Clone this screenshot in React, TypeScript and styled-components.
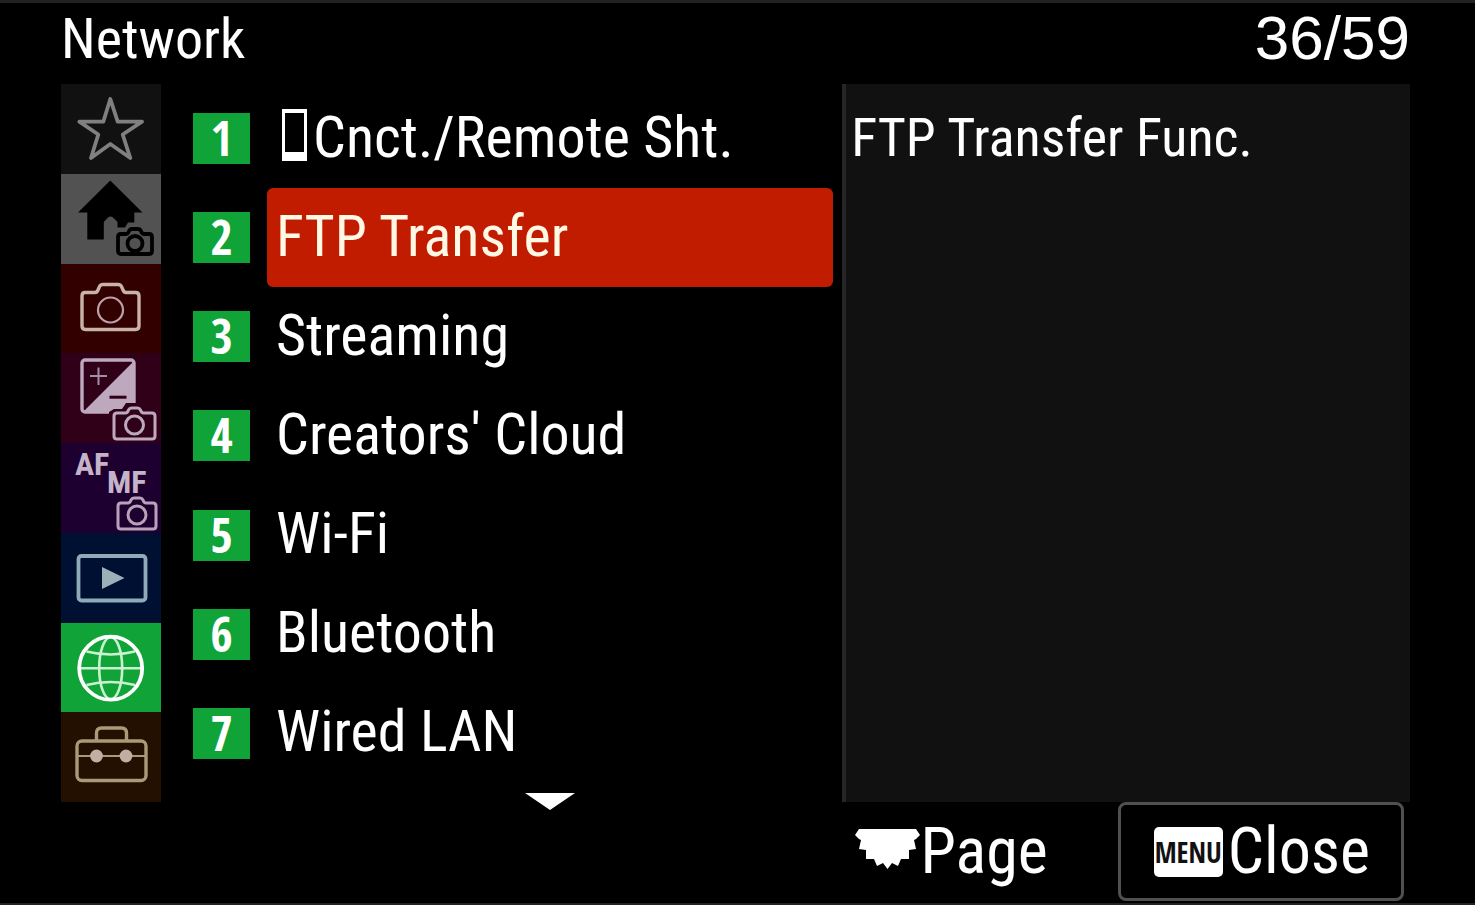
import React from "react";
import styled, { createGlobalStyle } from "styled-components";

const narrow = '"Roboto Condensed", Roboto, sans-serif';
const narrowBold = '"Open Sans Condensed", "Open Sans", sans-serif';

const GlobalStyle = createGlobalStyle`
  *, *::before, *::after { box-sizing: border-box; }
  body { margin: 0; background: #000; }
  h1, h2, p, ul, ol { margin: 0; padding: 0; font-weight: 400; }
  button { border: 0; margin: 0; padding: 0; background: none; color: inherit; font: inherit; cursor: pointer; }
`;

const Screen = styled.div`
  display: grid;
  grid-template-rows: 81px 1fr 101px;
  min-height: 100vh;
  border-top: 3px solid #222;
  border-bottom: 2px solid #222;
  background: #000;
  color: #fff;
  font-family: ${narrow};
`;

const Header = styled.header`
  display: flex;
  justify-content: space-between;
  padding: 0 65px 0 61px;
  line-height: 72px;
`;

const Title = styled.h1`
  font-size: 56px;
`;

const Counter = styled.p`
  font-family: "Liberation Sans", sans-serif;
  font-size: 62px;
  line-height: 70px;
`;

const Main = styled.main`
  display: grid;
  grid-template-columns: 100px minmax(0, 6fr) minmax(0, 5fr);
  padding: 0 65px 0 61px;
`;

const Tabs = styled.nav`
  display: flex;
  flex-direction: column;
`;

const Tab = styled.button<{ $bg: string }>`
  display: flex;
  flex: 1 1 0;
  background: ${(p) => p.$bg};

  svg {
    flex: none;
    width: 100px;
    height: 89px;
    overflow: visible;
  }
`;

const MenuColumn = styled.section`
  display: flex;
  flex-direction: column;
  padding: 5px 9px 0 32px;
`;

const MenuList = styled.ol`
  display: flex;
  flex: 1;
  flex-direction: column;
  list-style: none;
`;

const MenuRow = styled.li`
  display: flex;
  flex: 1 1 0;
  align-items: center;
  gap: 17px;
`;

const Badge = styled.span`
  flex: none;
  width: 57px;
  height: 51px;
  background: #10a337;
  font-family: ${narrowBold};
  font-size: 48px;
  font-weight: 700;
  line-height: 50px;
  text-align: center;
`;

const MenuItem = styled.button<{ $selected: boolean }>`
  display: flex;
  flex: 1;
  align-self: stretch;
  align-items: center;
  min-width: 0;
  padding: 0 9px 4px;
  border-radius: 6px;
  background: ${(p) => (p.$selected ? "#c21c00" : "transparent")};
  color: ${(p) => (p.$selected ? "#fff8e4" : "#fff")};
  font-size: 58px;
  line-height: 72px;
  white-space: nowrap;

  svg {
    flex: none;
    margin: 0 6px 4px;
  }
`;

const ScrollDown = styled.button`
  align-self: flex-end;
  display: flex;
  justify-content: center;
  width: calc(100% - 74px);
  height: 19px;
  padding-top: 10px;

  svg {
    flex: none;
  }
`;

const Detail = styled.aside`
  padding: 17px 5px;
  border-left: 4px solid #262626;
  background: #111;
  font-size: 54px;
  line-height: 74px;
`;

const Footer = styled.footer`
  display: flex;
  justify-content: flex-end;
  gap: 70px;
  padding: 0 71px 2px 0;
  font-size: 64px;
  line-height: 72px;
`;

const PageButton = styled.button`
  display: flex;
  align-items: center;

  svg {
    margin-bottom: 6px;
  }
`;

const CloseButton = styled.button`
  display: flex;
  align-items: center;
  gap: 5px;
  padding: 0 31px 0 33px;
  border: 3px solid #505050;
  border-radius: 8px;
`;

const MenuKey = styled.span`
  width: 69px;
  height: 50px;
  border-radius: 5px;
  background: #fff;
  color: #111;
  font-family: ${narrowBold};
  font-size: 28px;
  font-weight: 700;
  line-height: 50px;
  text-align: center;
`;

function SmallCamera({ x, y, color, w = 40 }: { x: number; y: number; color: string; w?: number }) {
  const m = w / 2;
  return (
    <g transform={`translate(${x} ${y})`} fill="none" stroke={color} strokeWidth="3" strokeLinejoin="round">
      <path
        d={`M3 5 H${m - 9} Q${m - 7} 5 ${m - 6} 2 Q${m - 5} 0 ${m - 3} 0 H${m + 3} Q${m + 5} 0 ${m + 6} 2 Q${m + 7} 5 ${m + 9} 5 H${w - 3} Q${w} 5 ${w} 8 V28 Q${w} 31 ${w - 3} 31 H3 Q0 31 0 28 V8 Q0 5 3 5 Z`}
      />
      <circle cx={m} cy="17" r="9" />
    </g>
  );
}

const Star = () => (
  <path
    d="M49.3 15 56.7 37.7H81L61.7 50.5 69.3 74 49.3 60 30 74 37.3 50.5 18.3 37.7H42.3Z"
    fill="none"
    stroke="#808080"
    strokeWidth="3.8"
    strokeLinejoin="round"
  />
);

const House = () => (
  <>
    <path
      d="M49.3 6.5 81.5 38.5H73.3V48.5H67L64 53.5H56.5V48L52 43.5Q49.5 41.5 47 43.5L42.8 48V65.6H26.3V38.5H17Z"
      fill="#000"
    />
    <g transform="translate(57 55)" fill="none" stroke="#000" strokeWidth="3.8" strokeLinejoin="round">
      <path d="M3 5H8Q10 5 11 2Q12 0 14 0H20Q22 0 23 2Q24 5 26 5H31Q34 5 34 8V22Q34 25 31 25H3Q0 25 0 22V8Q0 5 3 5Z" />
      <circle cx="17" cy="14.5" r="7.5" />
    </g>
  </>
);

const Camera = () => (
  <g fill="none">
    <path
      d="M24 28.5H34Q36 28.5 37 26L38.5 22.5Q39.5 20.5 42 20.5H57Q59.5 20.5 60.5 22.5L62 26Q63 28.5 65 28.5H74.5Q78 28.5 78 32V62Q78 65.5 74.5 65.5H24.5Q21 65.5 21 62V32Q21 28.5 24 28.5Z"
      stroke="#c9b2a8"
      strokeWidth="3.4"
    />
    <circle cx="49.5" cy="46" r="12.5" stroke="#bda1aa" strokeWidth="2.2" />
  </g>
);

const Exposure = () => (
  <>
    <rect x="21" y="7" width="52" height="52" rx="3" fill="none" stroke="#bda8bd" strokeWidth="3.4" />
    <path d="M22 59H70Q73 59 73 56V8Z" fill="#bda8bd" />
    <path d="M29 23H46M37.5 14.5V32" stroke="#a58ca5" strokeWidth="2" />
    <path d="M48.5 44.2H65.5" stroke="#300019" strokeWidth="3" />
    <path d="M48 64V59L53 56H61L65 50H82V64Z" fill="#300019" />
    <SmallCamera x={53} y={55} color="#bda8bd" w={41} />
  </>
);

const Focus = () => (
  <>
    <g fill="#c5b3c9" fontFamily={narrow} fontSize="32" fontWeight="700">
      <text x="14" y="32">AF</text>
      <text x="46" y="50">MF</text>
    </g>
    <SmallCamera x={57} y={55} color="#b7a2b9" w={38} />
  </>
);

const Playback = () => (
  <>
    <rect x="17.5" y="23" width="67" height="44.5" rx="3" fill="none" stroke="#8fabb7" strokeWidth="3.8" />
    <path d="M41 34 63.5 45 41 56Z" fill="#9bb0b9" />
  </>
);

const Globe = () => (
  <g fill="none" stroke="#c8f2d0" strokeWidth="2.6">
    <ellipse cx="49.7" cy="45.2" rx="11.5" ry="31" />
    <path d="M18 45.2H81M25.5 28.5Q49.7 34.5 74 28.5M25.5 62Q49.7 56 74 62" />
    <circle cx="49.7" cy="45.2" r="31.5" stroke="#fff" strokeWidth="3.8" />
  </g>
);

const Toolbox = () => (
  <>
    <g fill="none" stroke="#a99a78" strokeWidth="3.4">
      <rect x="16" y="29" width="69" height="39.5" rx="5" />
      <path d="M35.5 28V21Q35.5 16 40.5 16H60.5Q65.5 16 65.5 21V28" />
      <path d="M17 44H84" strokeWidth="2" />
    </g>
    <circle cx="35.5" cy="44" r="6.4" fill="#c3aea2" />
    <circle cx="65" cy="44" r="6.4" fill="#c3aea2" />
  </>
);

const tabs = [
  { name: "My Menu", bg: "#111111", Icon: Star },
  { name: "Main", bg: "#525252", Icon: House },
  { name: "Shooting", bg: "#330000", Icon: Camera },
  { name: "Exposure/Color", bg: "#300019", Icon: Exposure },
  { name: "Focus", bg: "#1e0030", Icon: Focus },
  { name: "Playback", bg: "#001033", Icon: Playback },
  { name: "Network", bg: "#10a337", Icon: Globe },
  { name: "Setup", bg: "#231000", Icon: Toolbox },
];

const items = [
  "Cnct./Remote Sht.",
  "FTP Transfer",
  "Streaming",
  "Creators' Cloud",
  "Wi-Fi",
  "Bluetooth",
  "Wired LAN",
];

const PhoneIcon = () => (
  <svg width="25" height="52" viewBox="0 0 25 52" aria-hidden="true">
    <path d="M0 0H25V52H0ZM3 4V43H22V4Z" fill="#fff" fillRule="evenodd" />
  </svg>
);

const DialIcon = () => (
  <svg width="65" height="40" viewBox="0 0 65 40" aria-hidden="true">
    <path
      d="M4 0H61L65 6 61 10 59 11 61 20 54 21 54 30 46 30 43 37 37 34 32.5 40 28 34 22 37 19 30 11 30 11 21 4 20 6 11 4 10 0 6Z"
      fill="#fff"
    />
  </svg>
);

export default function App() {
  const [selected, setSelected] = React.useState(1);
  return (
    <>
      <GlobalStyle />
      <Screen>
        <Header>
          <Title>Network</Title>
          <Counter>36/59</Counter>
        </Header>
        <Main>
          <Tabs aria-label="Menu tabs">
            {tabs.map(({ name, bg, Icon }) => (
              <Tab key={name} $bg={bg} aria-label={name}>
                <svg viewBox="0 0 100 89" aria-hidden="true">
                  <Icon />
                </svg>
              </Tab>
            ))}
          </Tabs>
          <MenuColumn>
            <MenuList>
              {items.map((label, i) => (
                <MenuRow key={label}>
                  <Badge>{i + 1}</Badge>
                  <MenuItem $selected={i === selected} onClick={() => setSelected(i)}>
                    {i === 0 && <PhoneIcon />}
                    {label}
                  </MenuItem>
                </MenuRow>
              ))}
            </MenuList>
            <ScrollDown aria-label="Scroll down">
              <svg width="50" height="17" viewBox="0 0 50 17" aria-hidden="true">
                <path d="M0 0H50L25 17Z" fill="#fff" />
              </svg>
            </ScrollDown>
          </MenuColumn>
          <Detail>
            <p>FTP Transfer Func.</p>
          </Detail>
        </Main>
        <Footer>
          <PageButton>
            <DialIcon />
            Page
          </PageButton>
          <CloseButton>
            <MenuKey>MENU</MenuKey>
            Close
          </CloseButton>
        </Footer>
      </Screen>
    </>
  );
}
